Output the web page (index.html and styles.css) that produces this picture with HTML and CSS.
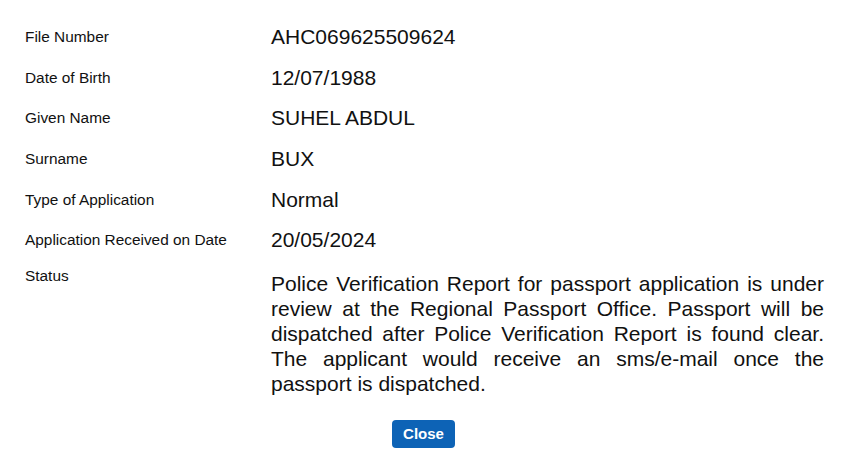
FILE: index.html
```html
<!DOCTYPE html>
<html>
<head>
<meta charset="utf-8">
<link rel="stylesheet" href="styles.css">
</head>
<body>
<div class="details">
  <div class="row"><div class="label">File Number</div><div class="value">AHC069625509624</div></div>
  <div class="row"><div class="label">Date of Birth</div><div class="value">12/07/1988</div></div>
  <div class="row"><div class="label">Given Name</div><div class="value">SUHEL ABDUL</div></div>
  <div class="row"><div class="label">Surname</div><div class="value">BUX</div></div>
  <div class="row"><div class="label">Type of Application</div><div class="value">Normal</div></div>
  <div class="row"><div class="label">Application Received on Date</div><div class="value">20/05/2024</div></div>
  <div class="row status-row"><div class="label">Status</div><div class="value status">Police Verification Report for passport application is under review at the Regional Passport Office. Passport will be dispatched after Police Verification Report is found clear. The applicant would receive an sms/e-mail once the passport is dispatched.</div></div>
</div>
<div class="actions"><button class="btn-close">Close</button></div>
</body>
</html>
```
FILE: styles.css
```css
html, body {
  margin: 0;
  padding: 0;
  background: #ffffff;
}
body {
  font-family: "Liberation Sans", Arial, sans-serif;
  color: #111;
}
.details {
  padding: 17px 38px 0 25px;
}
.row {
  display: grid;
  grid-template-columns: 246px 1fr;
  align-items: center;
  height: 40.6px;
}
.label {
  font-size: 15.4px;
  line-height: 18px;
}
.value {
  font-size: 21px;
  line-height: 24px;
}
.status-row {
  align-items: start;
  height: auto;
}
.status-row .label {
  padding-top: 6px;
}
.status {
  text-align: justify;
  line-height: 25px;
  padding-top: 10px;
}
.actions {
  display: flex;
  padding-left: 392px;
  margin-top: 24px;
}
.btn-close {
  width: 63px;
  height: 28px;
  border: none;
  border-radius: 4px;
  background: #0d63b6;
  color: #fff;
  font-family: "Liberation Sans", Arial, sans-serif;
  font-weight: bold;
  font-size: 15px;
  padding: 0;
}
```
